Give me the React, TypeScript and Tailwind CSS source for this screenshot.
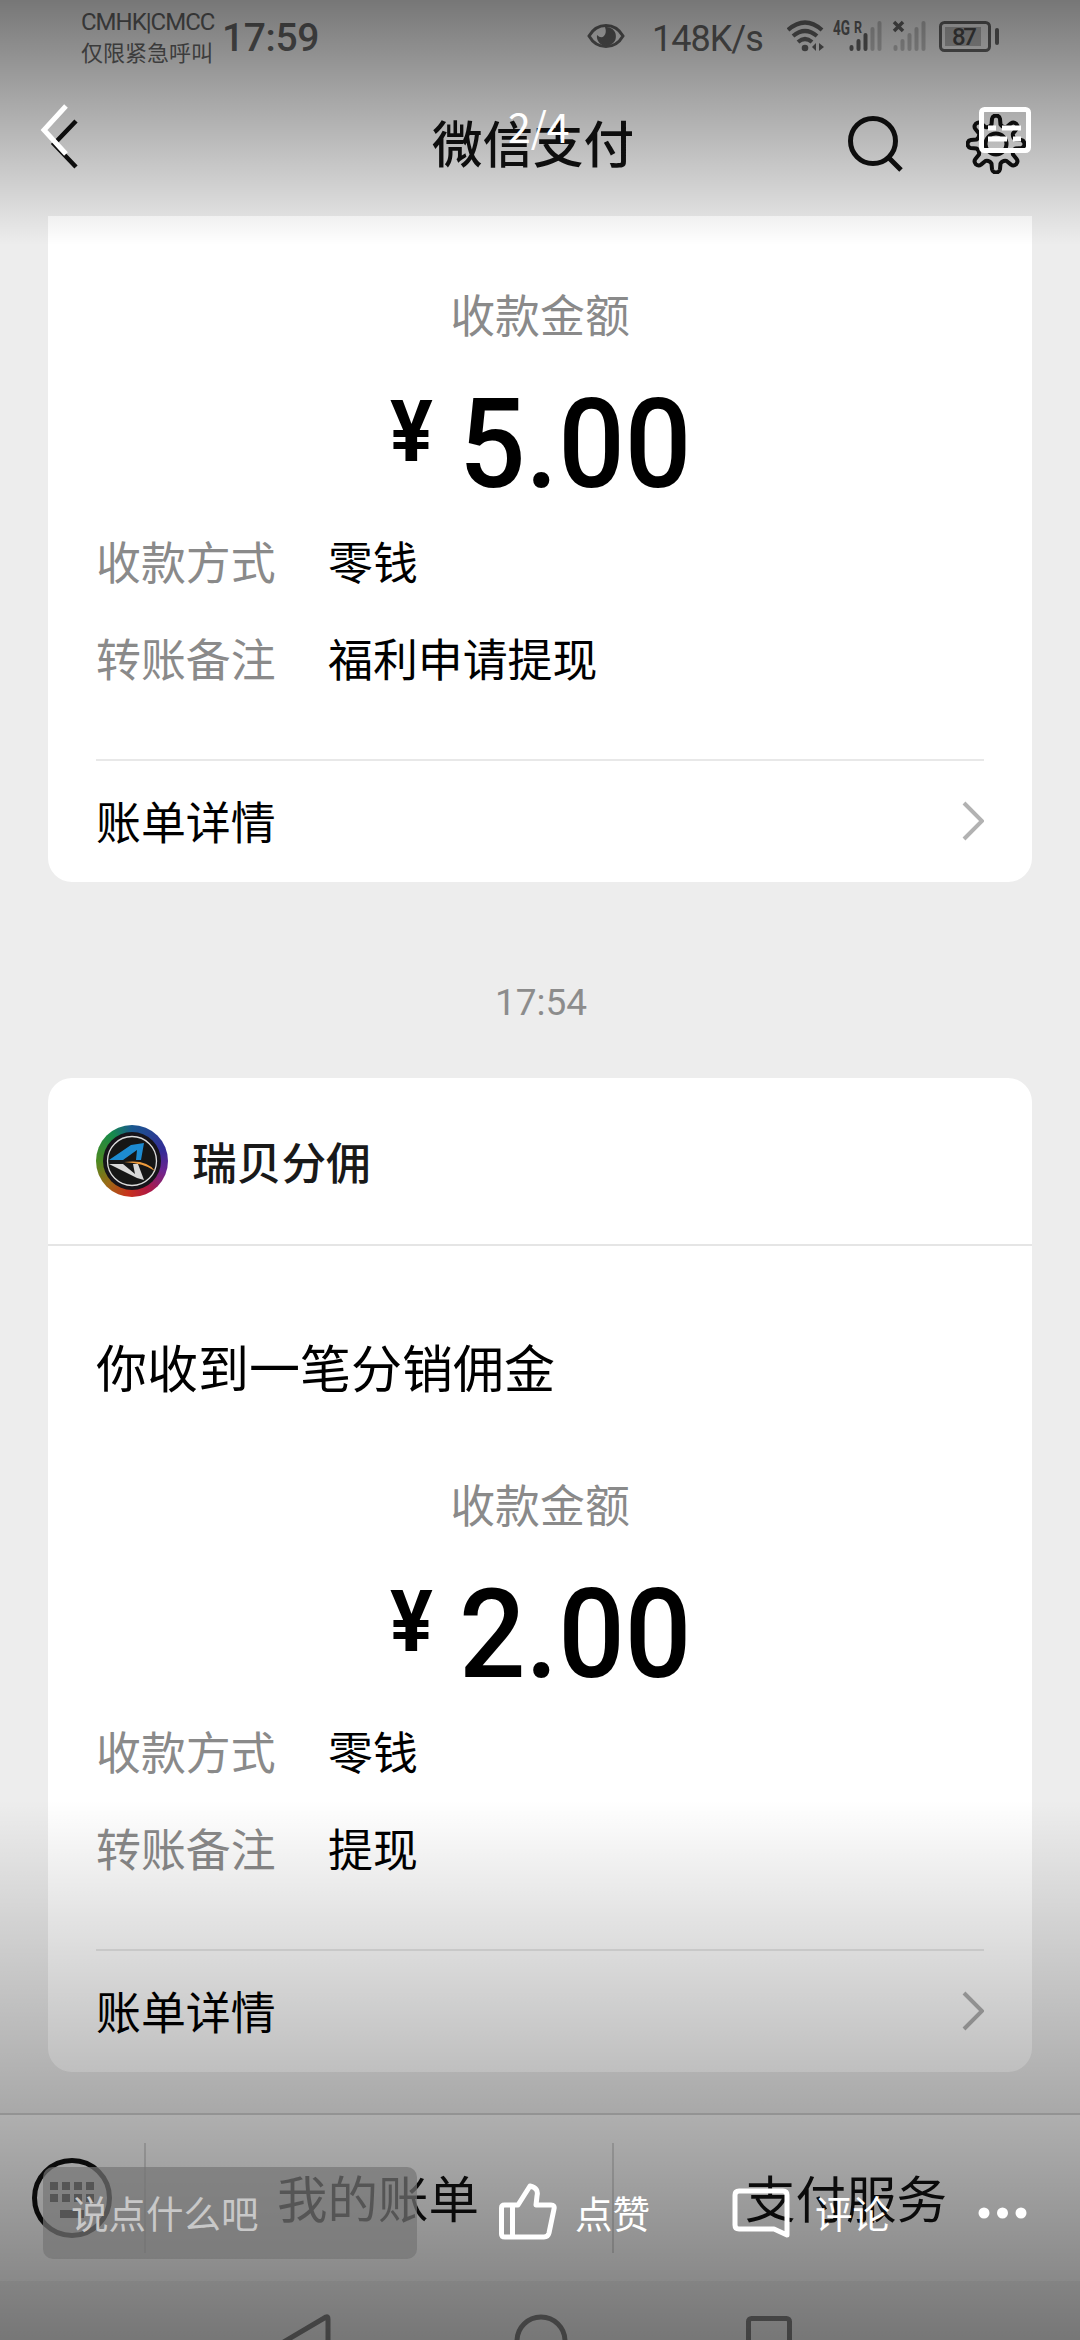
import type { ReactNode } from "react";

const chars = "font-['Noto_Sans_CJK_SC',sans-serif]";

// eight-toothed outline around (0, 0)
function gearPath() {
  const point = (r: number, deg: number) => {
    const a = (deg * Math.PI) / 180;
    return `${(r * Math.cos(a)).toFixed(1)} ${(r * Math.sin(a)).toFixed(1)}`;
  };
  let d = `M${point(20, -13)}`;
  for (let i = 0; i < 8; i++) {
    const a = i * 45;
    d += `L${point(25.5, a - 9)}Q${point(28.5, a - 7)} ${point(28.5, a)}`;
    d += `Q${point(28.5, a + 7)} ${point(25.5, a + 9)}L${point(20, a + 13)}`;
    d += `Q${point(17.5, a + 22.5)} ${point(20, a + 32)}`;
  }
  return d + "Z";
}

function StatusBar() {
  return (
    <div className="flex h-[72px] pl-[81px] pt-[6px] text-[#636363]">
      <div className="w-[141px] shrink-0 whitespace-nowrap">
        <div className="font-['Roboto',sans-serif] text-[24px] leading-[32px] tracking-[-1px]">CMHK|CMCC</div>
        <div className="text-[22px] leading-[26px]">仅限紧急呼叫</div>
      </div>
      <div className="w-[365px] shrink-0 font-['Roboto',sans-serif] text-[39px] font-medium leading-[65px] tracking-[-0.4px]">17:59</div>
      <svg className="mt-[17px] h-[26px] w-[38px] shrink-0" viewBox="0 0 38 26">
        <path d="M2 13C10-1 28-1 36 13C28 27 10 27 2 13Z" fill="none" stroke="currentColor" strokeWidth="3" />
        <path d="M18 4a9.500 9.500 0 1 1-8 8q4 4 7 1t1-9Z" fill="currentColor" />
      </svg>
      <div className="ml-[27px] w-[135px] shrink-0 font-['Roboto',sans-serif] text-[36px] leading-[66px] tracking-[-1px]">148K/s</div>
      <svg className="mt-[12px] h-[38px] w-[212px] shrink-0" viewBox="0 0 212 38">
        <g fill="none" stroke="currentColor" strokeWidth="4.200">
          <path d="M1 12Q18-3 35 12" />
          <path d="M6 18Q18 8 30 18" />
          <path d="M11 24Q18 18 25 24" />
        </g>
        <circle cx="18" cy="30" r="3.3" fill="currentColor" />
        <path d="M29 25v8l-4-4ZM32 25v8l5-4Z" fill="currentColor" />
        <text x="46" y="17" fontSize="20" fontWeight="700" fill="currentColor" fontFamily="Roboto" textLength="17" lengthAdjust="spacingAndGlyphs">4G</text>
        <text x="67" y="15" fontSize="16" fontWeight="700" fill="currentColor" fontFamily="Roboto" textLength="8" lengthAdjust="spacingAndGlyphs">R</text>
        <g strokeWidth="4" stroke="currentColor" strokeLinecap="round">
          <path d="M64.500 29v2M71.500 23v8M78.500 17v14" />
          <path d="M85.500 11v20M92.500 5v26M108.500 29v2M115.500 23v8M122.500 17v14M129.500 11v20M136.500 5v26" opacity=".35" />
        </g>
        <path d="m107 4 9 9m0-9-9 9" stroke="currentColor" strokeWidth="3.500" />
        <rect x="153.500" y="4.500" width="49" height="28" rx="4" fill="none" stroke="currentColor" strokeWidth="3" />
        <rect x="158" y="9" width="36" height="19" fill="#b4b4b4" />
        <rect x="208" y="10" width="4" height="17" rx="2" fill="currentColor" />
        <text x="165" y="27" fontSize="24" fill="#4a4a4a" fontFamily="Roboto" fontWeight="500" textLength="25">87</text>
      </svg>
    </div>
  );
}

function TitleBar() {
  return (
    <div className="flex h-[144px] items-center text-[#111]">
      <svg className="ml-[50px] h-[50px] w-[28px]" viewBox="0 0 28 50">
        <path d="M26 2 4 25l22 23" fill="none" stroke="currentColor" strokeWidth="4.500" />
      </svg>
      <h1 className="ml-[354px] w-[416px] pb-[6px] text-[50.500px] font-medium leading-none">微信支付</h1>
      <svg className="h-[56px] w-[56px]" viewBox="0 0 56 56">
        <circle cx="25" cy="25" r="22.500" fill="none" stroke="currentColor" strokeWidth="5" />
        <path d="m40 41 13 13" stroke="currentColor" strokeWidth="5" />
      </svg>
      <svg className="ml-[62px] h-[60px] w-[60px]" viewBox="-30 -30 60 60" fill="none" stroke="currentColor" strokeWidth="4">
        <path d={gearPath()} strokeLinejoin="round" />
        <circle r="10.500" />
      </svg>
    </div>
  );
}

function Logo() {
  return (
    <div className="flex h-[72px] w-[72px] items-center justify-center rounded-full bg-[conic-gradient(#19588f,#342b96_20%,#6d2590_30%,#b01942_42%,#c8321c_52%,#9b6a15_63%,#4c8a22_75%,#168a4b_90%,#19588f)]">
      <svg className="h-[60px] w-[60px]" viewBox="0 0 60 60">
        <circle cx="30" cy="30" r="29" fill="#17141a" />
        <circle cx="30" cy="30" r="24.500" fill="#161616" stroke="#ddd" strokeWidth="1.300" />
        <path d="M7 29 29 14l13-2-3 17h-5l1-10-14 10Z" fill="#1d8bd1" />
        <path d="M7 33h14l12 10-2-10h5l6 16-7-2Z" fill="#d8d8d8" />
        <path d="M22 31q23-3 31 9-11-8-31-9Z" fill="#ef9b3c" />
      </svg>
    </div>
  );
}

function Row({ label, value }: { label: string; value: string }) {
  return (
    <div className="flex h-[97px] items-center">
      <span className="w-[232px] text-[#8a8a8a]">{label}</span>
      <span>{value}</span>
    </div>
  );
}

function Receipt({ amount, note }: { amount: string; note: string }) {
  return (
    <div className="px-[48px] text-[44.900px] leading-none">
      <div className="text-center text-[#8a8a8a]">收款金额</div>
      <div className="mt-[46px] flex h-[123px] pl-[294px] font-['Roboto',sans-serif] text-black">
        <span className="mt-[6px] w-[69px] origin-left scale-x-[.93] text-[86px] font-bold leading-[86px]">¥</span>
        <span className="origin-left scale-x-[.945] text-[124px] font-medium leading-[124px]">{amount}</span>
      </div>
      <div className="pt-[7px] text-black">
        <Row label="收款方式" value="零钱" />
        <Row label="转账备注" value={note} />
      </div>
      <div className="mt-[52px] flex h-[122px] items-center justify-between border-t-2 border-[#e8e8e8] text-black">
        <span className="pt-[2px]">账单详情</span>
        <svg className="h-[40px] w-[24px]" viewBox="0 0 24 40">
          <path d="m4 2 18 18L4 38" fill="none" stroke="#b2b2b2" strokeWidth="4" />
        </svg>
      </div>
    </div>
  );
}

function Card({ children, className }: { children: ReactNode; className: string }) {
  return <section className={`mx-[48px] bg-white ${className}`}>{children}</section>;
}

function MenuBar() {
  return (
    <div className="flex h-[168px] items-center border-t-2 border-[#cfcfcf] bg-[#f7f7f7] text-[50.500px] leading-none text-[#111]">
      <svg className="ml-[32px] h-[80px] w-[80px]" viewBox="0 0 80 80">
        <circle cx="40" cy="40" r="37.500" fill="none" stroke="currentColor" strokeWidth="5" />
        <path d="M18 28h44M18 40h44" stroke="currentColor" strokeWidth="8" strokeDasharray="8 4" />
        <path d="M28 56h24" stroke="currentColor" strokeWidth="8" />
      </svg>
      <div className="ml-[32px] h-[110px] w-[2px] bg-[#d5d5d5]" />
      <div className="w-[466px] pb-[3px] pr-[2px] text-center">我的账单</div>
      <div className="h-[110px] w-[2px] bg-[#d5d5d5]" />
      <div className="flex-1 pb-[3px] pr-[2px] text-center">支付服务</div>
    </div>
  );
}

function ViewerTop() {
  return (
    <div className="absolute inset-x-0 top-0 h-[245px] bg-gradient-to-b from-black/50 to-transparent">
      <div className="flex items-start pt-[104px] text-white">
        <svg className="ml-[40px] h-[52px] w-[30px]" viewBox="0 0 30 52">
          <path d="M26 2 4 26l22 24" fill="none" stroke="currentColor" strokeWidth="5" />
        </svg>
        <div className="ml-[438px] w-[471px] text-[41px] leading-[42px]">2/4</div>
        <svg className="mt-[3px] h-[46px] w-[52px]" viewBox="0 0 52 46">
          <rect x="2.500" y="2.500" width="47" height="41" rx="3" fill="none" stroke="currentColor" strokeWidth="5" />
          <path d="M9 21h8M23 21h19M9 32h19M34 32h8" stroke="currentColor" strokeWidth="5" />
        </svg>
      </div>
    </div>
  );
}

function ViewerBottom() {
  return (
    <div className="absolute inset-x-0 bottom-0 h-[540px] bg-gradient-to-b from-transparent to-black/50 pt-[367px]">
      <div className="flex h-[92px] items-center text-[37.500px] leading-none text-white">
        <div className="ml-[43px] flex h-[92px] w-[374px] items-center rounded-[10px] bg-[#757575]/70 pb-[3px] pl-[28px] text-[#c8c8c8]">说点什么吧</div>
        <svg className="ml-[82px] h-[60px] w-[60px]" viewBox="0 0 60 60">
          <path d="M5.500 22H19L31 3q9 2 7 10L37 22h15q4 0 3 4l-5 24q-1 4-5 4H6q-3.500 0-3.500-3V25q0-3 3-3ZM13.500 22v32" fill="none" stroke="currentColor" strokeWidth="5" strokeLinejoin="round" />
        </svg>
        <div className="ml-[16px] w-[157px] pb-[3px]">点赞</div>
        <svg className="h-[52px] w-[58px]" viewBox="0 0 58 52">
          <path d="M7 4h44q4 0 4 4v40l-13-6H7q-4 0-4-4V8q0-4 4-4Z" fill="none" stroke="currentColor" strokeWidth="5" strokeLinejoin="round" />
        </svg>
        <div className="ml-[25px] w-[163px] pb-[3px]">评论</div>
        <svg className="h-[12px] w-[50px]" viewBox="0 0 50 12" fill="currentColor">
          <circle cx="6" cy="6" r="5.500" />
          <circle cx="24.500" cy="6" r="5.500" />
          <circle cx="43" cy="6" r="5.500" />
        </svg>
      </div>
    </div>
  );
}

export default function App() {
  return (
    <main className={`relative h-[2340px] w-[1080px] overflow-hidden bg-[#ededed] ${chars}`}>
      <header className="h-[216px]">
        <StatusBar />
        <TitleBar />
      </header>

      <Card className="h-[666px] rounded-b-[24px] pt-[76px]">
        <Receipt amount="5.00" note="福利申请提现" />
      </Card>

      <div className="flex h-[196px] items-center justify-center pl-[2px] pt-[45px] font-['Roboto',sans-serif] text-[37px] text-[#8c8c8c]">17:54</div>

      <Card className="h-[994px] rounded-[24px]">
        <div className="flex h-[168px] items-center border-b-2 border-[#e5e5e5] pl-[48px]">
          <Logo />
          <span className="ml-[24px] pb-[1px] text-[44.700px] font-medium text-[#191919]">瑞贝分佣</span>
        </div>
        <h2 className="pb-[90px] pl-[48px] pt-[95px] text-[51px] leading-none text-black">你收到一笔分销佣金</h2>
        <Receipt amount="2.00" note="提现" />
      </Card>

      <div className="h-[41px]" />
      <MenuBar />
      <svg className="h-[59px] w-[1080px]" viewBox="0 0 1080 59" fill="none" stroke="#828282" strokeWidth="5">
        <path d="M265 72 326 36q2-1 2 2v50Z" strokeLinejoin="round" />
        <circle cx="541" cy="60" r="24" />
        <rect x="748.500" y="37.500" width="41" height="50" rx="3" />
      </svg>

      <ViewerTop />
      <ViewerBottom />
    </main>
  );
}
